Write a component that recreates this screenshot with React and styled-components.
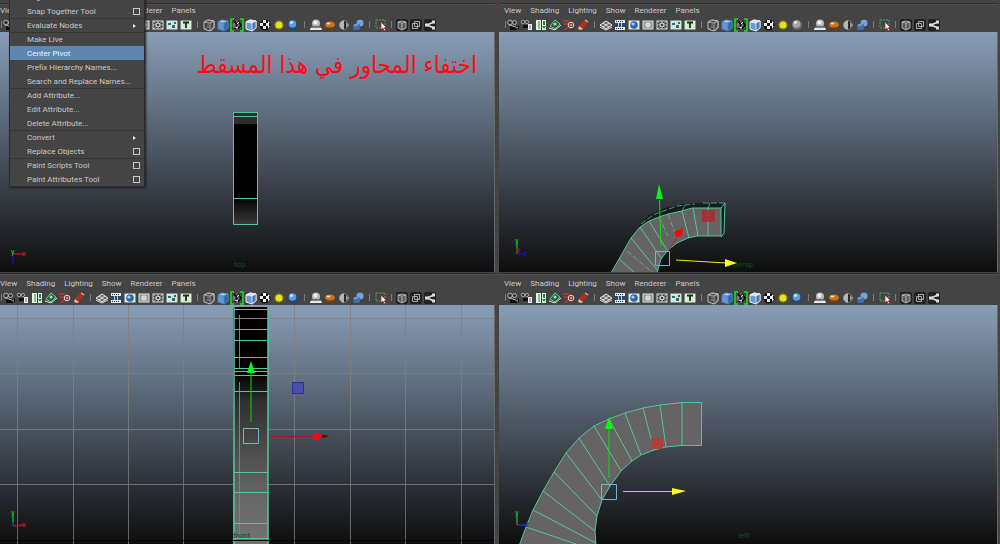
import styled, { createGlobalStyle, css } from 'styled-components';

const GlobalStyle = createGlobalStyle`
  * {
    box-sizing: border-box;
  }
  body {
    margin: 0;
    background: #444444;
    font-family: Roboto, 'Liberation Sans', sans-serif;
    font-size: 8px;
    color: #c8c8c8;
  }
  button {
    font: inherit;
    color: inherit;
    border: 0;
    padding: 0;
    background: none;
  }
`;

const mesh = '#52c79a';

const Workspace = styled.main`
  position: relative;
  display: grid;
  grid-template-columns: 495fr 499fr;
  grid-template-rows: 272fr 271fr;
  gap: 1px 4px;
  height: 100vh;
  min-height: 400px;
  padding-right: 2px;
  overflow: hidden;
`;

const Panel = styled.section`
  display: flex;
  flex-direction: column;
  min-width: 0;
  min-height: 0;
  overflow: hidden;
`;

const Header = styled.header`
  padding-top: 4px;
  padding-left: ${({ $inset }) => ($inset ? '5px' : '0')};
  box-shadow: ${({ $top }) =>
    $top
      ? 'inset 0 3px 0 #444444, inset 0 4px 0 #303030, inset 0 5px 0 #505050'
      : 'inset 0 1px 0 #2e2e2e, inset 0 2px 0 #505050'};
`;

const MenuBar = styled.nav`
  display: flex;
  gap: 9px;
  height: 13px;

  button {
    line-height: 13px;
    white-space: nowrap;
  }
`;

const Toolbar = styled.div`
  display: flex;
  align-items: center;
  height: 15px;
`;

const Gap = styled.span`
  display: flex;
  align-items: center;
  justify-content: center;
  flex: none;
  width: ${({ $width }) => $width}px;
  height: 14px;

  &::after {
    content: '';
    width: 1px;
    height: 7px;
    background: #7c7c7c;
  }
`;

const Tool = styled.button`
  display: flex;
  flex: none;
  width: 14px;
  height: 14px;

  svg {
    width: 14px;
    height: 14px;
  }
`;

const Viewport = styled.div`
  position: relative;
  flex: 1;
  min-height: 0;
  border-right: 1px solid #66696c;
  background: linear-gradient(#889db6, #49525e 52%, #0d0d0d);
`;

const Scene = styled.svg`
  display: block;
  width: 100%;
  height: 100%;

  text {
    font-family: Roboto, 'Liberation Sans', sans-serif;
  }
`;

const Note = styled.p`
  position: absolute;
  top: 15px;
  right: 17px;
  margin: 0;
  color: #ff0a14;
  font-family: 'DejaVu Sans Condensed', 'DejaVu Sans', sans-serif;
  font-size: 24px;
  line-height: 36px;
  white-space: nowrap;
`;

const DropDown = styled.div`
  position: absolute;
  top: -10px;
  left: 9px;
  width: 136px;
  background: #444444;
  border: 1px solid #2b2b2b;
  border-top: 0;
  box-shadow: 1px 1px 2px #1c1c1c;
`;

const Item = styled.button`
  display: flex;
  align-items: center;
  justify-content: space-between;
  width: 100%;
  height: 14px;
  padding: 0 4px 0 17px;
  line-height: 13px;
  text-align: left;
  white-space: nowrap;
  ${({ $ruled }) =>
    $ruled &&
    css`
      border-top: 1px solid #353535;
    `}
  ${({ $active }) =>
    $active &&
    css`
      background: #5c86b2;
      color: #f2f2f2;
    `}
`;

const OptionBox = styled.span`
  width: 7px;
  height: 7px;
  border: 1px solid #c8c8c8;
`;

const SubArrow = styled.span`
  margin-right: 4px;
  border: 2px solid transparent;
  border-left: 3px solid #e0e0e0;
  border-right: 0;
`;

const menus = ['View', 'Shading', 'Lighting', 'Show', 'Renderer', 'Panels'];

const modifyItems = [
  { label: 'Align Tool' },
  { label: 'Snap Together Tool', box: true },
  { label: 'Evaluate Nodes', sub: true, ruled: true },
  { label: 'Make Live', ruled: true },
  { label: 'Center Pivot', active: true },
  { label: 'Prefix Hierarchy Names...' },
  { label: 'Search and Replace Names...' },
  { label: 'Add Attribute...', ruled: true },
  { label: 'Edit Attribute...' },
  { label: 'Delete Attribute...' },
  { label: 'Convert', sub: true, ruled: true },
  { label: 'Replace Objects', box: true },
  { label: 'Paint Scripts Tool', box: true, ruled: true },
  { label: 'Paint Attributes Tool', box: true },
];

const Cube = ({ top, left, right, line }) => (
  <>
    <path d="M2 4L6 2L12 3V10L8 13L2 11Z" fill={left} stroke={line} />
    <path d="M2 4L6 2L12 3L8 5Z" fill={top} stroke={line} strokeWidth=".8" />
    <path d="M8 5L12 3V10L8 13Z" fill={right} stroke={line} strokeWidth=".8" />
  </>
);

const Checks = () => (
  <>
    <circle cx="7" cy="7" r="5.5" fill="#111" />
    <path
      d="M5 2h3v3H5zM2 5h3v3H2zM8 5h3v3H8zM5 8h3v3H5zM10 8h2l-2 3zM10 3l2 2h-2z"
      fill="#eee"
    />
  </>
);

const Ball = ({ base, shade }) => (
  <>
    <circle cx="7" cy="7" r="5" fill={shade} />
    <circle cx="6.5" cy="6" r="3.8" fill={base} />
    <circle cx="5.5" cy="4.5" r="1.5" fill="#fff" opacity=".75" />
  </>
);

const Tile = ({ fill, children }) => (
  <>
    <rect x="2" y="3" width="10" height="8" fill={fill} stroke="#d8e4dc" />
    {children}
  </>
);

const icons = {
  'Select camera': (
    <>
      <circle cx="4" cy="4.5" r="2.3" fill="#333" stroke="#ccc" strokeWidth=".8" />
      <circle cx="8.5" cy="4.5" r="2" fill="#333" stroke="#ccc" strokeWidth=".8" />
      <path d="M4 8h7v4H4zM11 9l2-2v5z" fill="#0d0d0d" />
      <path d="M3 7l7 2M10 10l2-1" stroke="#bbb" />
    </>
  ),
  'Camera attributes': (
    <>
      <circle cx="3" cy="4" r="1.8" fill="#333" stroke="#bbb" strokeWidth=".8" />
      <circle cx="7" cy="4" r="1.6" fill="#333" stroke="#bbb" strokeWidth=".8" />
      <path d="M3 7h5v3H3z" fill="#111" />
      <path d="M8 6h4v6H8z" fill="#eee" />
      <path d="M9 8h2M9 10h2" stroke="#777" />
    </>
  ),
  Bookmarks: (
    <>
      <path d="M2 2h10v10H2z" fill="#e6f4e4" />
      <path d="M4 3h2v8H4z" fill="#7cc489" />
      <path d="M7 2h1v10H7z" fill="#3a3a3a" />
      <path d="M9 3h2v4H9z" fill="#238a38" />
      <path d="M8 8h4l-2 3z" fill="#238a38" />
    </>
  ),
  'Image plane': (
    <>
      <path d="M2 8L7 2L12 6L7 11Z" fill="#2d5b40" stroke="#6bd08d" />
      <path d="M1 10l6 2 6-5" fill="none" stroke="#d6e7da" />
      <circle cx="7" cy="6" r="1.5" fill="#9fe0b0" />
    </>
  ),
  '2D pan and zoom': (
    <>
      <path d="M1 3h6M2 6h4M3 12l4-4" stroke="#c4362c" strokeWidth="1.5" />
      <circle cx="9" cy="7" r="2.8" fill="#6b1d18" stroke="#e8dcdc" />
      <path d="M9 5.500v3M7.500 7h3" stroke="#ffb0a0" />
    </>
  ),
  'Grease pencil': (
    <>
      <path d="M3 8L9 2l3 2-5 7z" fill="#b92a1e" />
      <path d="M9 2l3 2" stroke="#f3a090" strokeWidth="1.500" />
      <path d="M2 11l1-3 4 3-2 1z" fill="#e9b8a0" />
    </>
  ),
  Grid: (
    <>
      <path d="M1 7l6-4 6 4-6 4z" fill="#6a6a6a" stroke="#eee" />
      <path d="M4 5l6 4M10 5L4 9M1 9l6 3 6-3" fill="none" stroke="#ddd" />
    </>
  ),
  'Film gate': (
    <>
      <path d="M2 2h10v10H2z" fill="#e4ecf2" />
      <path d="M2 5h10v4H2z" fill="#2a4a68" />
      <path d="M3 3.500h8M3 10.500h8" stroke="#1c2c3a" strokeDasharray="1 1" />
      <path d="M5.500 5v4M8.500 5v4" stroke="#b5cadb" />
    </>
  ),
  'Resolution gate': (
    <Tile fill="#dce9f4">
      <circle cx="7" cy="7" r="3.8" fill="#2b6aa6" />
      <circle cx="6" cy="6" r="1.6" fill="#a6d2f5" />
    </Tile>
  ),
  'Gate mask': (
    <Tile fill="#959595">
      <circle cx="7" cy="7" r="2.800" fill="#d6d6d6" />
    </Tile>
  ),
  'Field chart': (
    <Tile fill="#2f2f2f">
      <path d="M2 3l10 8M12 3L2 11M7 3v8M2 7h10" stroke="#ddd" strokeWidth=".8" />
      <circle cx="7" cy="7" r="2" fill="#444" stroke="#eee" />
    </Tile>
  ),
  'Safe action': (
    <Tile fill="#cfe9d8">
      <path d="M3 5h3v2H3zM7 7h3v3H7zM9 4h2v2H9z" fill="#2b6f78" />
    </Tile>
  ),
  'Safe title': (
    <Tile fill="#d6f2d2">
      <path d="M4 4.500h6M7 4v6" stroke="#16321a" strokeWidth="1.800" />
    </Tile>
  ),
  Wireframe: (
    <>
      <Cube top="none" left="#444" right="none" line="#b8b8b8" />
      <path d="M6 2v7l6 1M6 9l-4 2" fill="none" stroke="#888" strokeWidth=".8" />
    </>
  ),
  'Smooth shade': <Cube top="#b9d6f5" left="#5f98d6" right="#356aa8" line="#4c80bb" />,
  'Use default material': (
    <>
      <circle cx="7" cy="7" r="4.500" fill="#777" />
      <path d="M4 3l3 3-2 5M8 3l3 4-3 4" fill="none" stroke="#111" strokeWidth="2" />
      <path d="M7 6l2-2M5 9l3 1" stroke="#eee" />
      <path d="M4 1H1v12h3M10 1h3v12h-3" fill="none" stroke="#15e51b" strokeWidth="1.500" />
    </>
  ),
  'Wireframe on shaded': <Cube top="#d8e8fa" left="#6b9bd0" right="#4779b3" line="#e6eef8" />,
  Textured: <Checks />,
  'Use all lights': (
    <>
      <circle cx="7" cy="7" r="5" fill="#6d6a24" />
      <circle cx="7" cy="7" r="3.500" fill="#e8e21a" />
    </>
  ),
  Shadows: <Ball base="#5a9bd8" shade="#1f4a7c" />,
  'Shadows off': <Ball base="#a8a8a8" shade="#6c6c6c" />,
  Ambient: (
    <>
      <path d="M1 11l3-3h6l3 3v1H1z" fill="#e8e8e8" />
      <circle cx="7" cy="5.500" r="4" fill="#b9b9b9" />
      <path d="M3 9h8" stroke="#222" />
      <circle cx="6.500" cy="4.500" r="2" fill="#f2f2f2" />
    </>
  ),
  'Motion blur': (
    <>
      <ellipse cx="7" cy="7.500" rx="5.500" ry="4" fill="#7c3d0b" />
      <ellipse cx="7" cy="6.500" rx="4.800" ry="3" fill="#c87426" />
      <ellipse cx="5.500" cy="5.500" rx="2" ry="1" fill="#ffdca0" />
    </>
  ),
  Multisample: (
    <>
      <circle cx="7" cy="7" r="4.500" fill="#2a2a2a" stroke="#777" />
      <path d="M7 2.500a4.500 4.500 0 000 9z" fill="#b5b5b5" />
      <path d="M9 4v6l3-3z" fill="#999" />
    </>
  ),
  'Depth of field': (
    <>
      <circle cx="9" cy="5" r="3.500" fill="#6fa4dc" />
      <rect x="2" y="6" width="7" height="6" rx="2" fill="#3b6fae" />
      <path d="M3 7h4" stroke="#9cc7f3" />
    </>
  ),
  'Isolate select': (
    <>
      <rect x="2" y="2" width="9" height="8" fill="none" stroke="#3fae63" strokeDasharray="2 1" />
      <path d="M7 4v8l2-2 1 3 1.500-.5-1-3h2z" fill="#f3f3f3" stroke="#a51f28" strokeWidth=".8" />
    </>
  ),
  'X-ray': (
    <>
      <rect x="1" y="1" width="12" height="12" rx="2" fill="#222" />
      <path
        d="M3 4l4-1 4 1v6l-4 2-4-2zM3 4l4 1 4-1M7 5v7"
        fill="#5c5c5c"
        stroke="#c8c8c8"
        strokeWidth=".8"
      />
    </>
  ),
  'X-ray joints': (
    <>
      <rect x="1" y="1" width="12" height="12" rx="2" fill="#222" />
      <path d="M3.500 5.500h5v5h-5zM5.500 3.500h5v5h-5z" fill="none" stroke="#a8a8a8" />
    </>
  ),
  'Share view': (
    <>
      <rect x="1" y="1" width="12" height="12" rx="2" fill="#222" />
      <path d="M11 4L4 7l7 3" fill="none" stroke="#e0e0e0" strokeWidth="1.500" />
      <path d="M2 5.500h4v3H2zM9 2.500h3v3H9zM9 8.500h3v3H9z" fill="#e0e0e0" />
    </>
  ),
};

const toolGroups = [
  {
    gap: 2,
    tools: ['Select camera', 'Camera attributes', 'Bookmarks', 'Image plane', '2D pan and zoom', 'Grease pencil'],
  },
  {
    gap: 9,
    tools: ['Grid', 'Film gate', 'Resolution gate', 'Gate mask', 'Field chart', 'Safe action', 'Safe title'],
  },
  {
    gap: 9,
    tools: ['Wireframe', 'Smooth shade', 'Use default material', 'Wireframe on shaded', 'Textured', 'Use all lights', 'Shadows'],
  },
  { gap: 9, tools: ['Ambient', 'Motion blur', 'Multisample', 'Depth of field'] },
  { gap: 9, tools: ['Isolate select'] },
  { gap: 7, tools: ['X-ray', 'X-ray joints', 'Share view'] },
];

const Axis = ({ x, y, ends }) => (
  <g fontSize="7" fontWeight="bold">
    {ends.map(({ name, dx, dy, color }) => (
      <g key={name}>
        <path d={`M${x} ${y}l${dx} ${dy}`} stroke={color} strokeWidth="1.5" />
        {name !== 'origin' && (
          <text x={x + dx - 2} y={y + dy + 2} fill={color}>
            {name}
          </text>
        )}
      </g>
    ))}
  </g>
);

const Caption = ({ x, y, children }) => (
  <text x={x} y={y} fontSize="8" fill="#0c4a24">
    {children}
  </text>
);

function TopScene() {
  return (
    <Scene viewBox="0 32 494 240" preserveAspectRatio="xMidYMid slice">
      <defs>
        <linearGradient id="top-foot" x2="0" y2="1">
          <stop stopColor="#060606" />
          <stop offset="1" stopColor="#3a3a3a" />
        </linearGradient>
      </defs>
      <path d="M233 113h25v11h-25z" fill="#2d2d2d" />
      <path d="M233 124h25v75h-25z" fill="#000" />
      <path d="M233 199h25v26h-25z" fill="url(#top-foot)" />
      <path
        d="M233.500 112.500h24v112h-24zM233.500 116.500h24M233.500 198.500h24"
        fill="none"
        stroke={mesh}
      />
      <Axis
        x={13}
        y={254}
        ends={[
          { name: 'x', dx: 11, dy: 0, color: '#b3141c' },
          { name: 'origin', dx: 0, dy: 10, color: '#1410b8' },
          { name: 'y', dx: 0, dy: -2, color: '#10a828' },
        ]}
      />
      <Caption x={234} y={267}>top</Caption>
    </Scene>
  );
}

function PerspScene() {
  return (
    <Scene viewBox="499 32 498 240" preserveAspectRatio="xMidYMid slice">
      <path
        d="M636 230L649 215L665 208L682 204L700 203H725L724 233L721 237V208L692 208L668 214L649 221Z"
        fill="#161c1d"
      />
      <path
        d="M721 208H708L692 208L682 211L668 214L659 217L649 221L640 227L631 238L619 259L611 273H657L661 259L668 250L677 243L688 238L697 236H721Z"
        fill="#656363"
        stroke={mesh}
      />
      <path
        d="M708 208v28M693 208l5 28M682 211l7 27M649 221l18 29M640 227l21 31M631 238l27 33M619 259l16 14M721 208l4-5-1 30-3 4"
        fill="none"
        stroke={mesh}
      />
      <path
        d="M668 214l9 25M659 217l9 19M627 251l26 22M641 224l12-9 24-9 18-2M703 203h22M708 208l2-5M682 211l3-6"
        fill="none"
        stroke={mesh}
        strokeDasharray="6 2"
        opacity=".75"
      />
      <path d="M702 210h13v12h-13z" fill="#a82c2e" opacity=".85" />
      <path d="M669 250l9-14" stroke="#a22" />
      <path d="M674 232l9-4-1 8-6 1z" fill="#ff0606" />
      <path d="M661 246L659.500 200" stroke="#09e40c" />
      <path d="M659 184l4 15h-7z" fill="#00ff08" />
      <path d="M655.500 251.500h14v14h-14z" fill="none" stroke="#79b4cc" />
      <path d="M676 260l50 3" stroke="#f0ea10" />
      <Caption x={733} y={267}>persp</Caption>
      <path d="M725 259l12 4-12 4z" fill="#ffff0a" />
      <Axis
        x={517}
        y={254}
        ends={[
          { name: 'z', dx: 9, dy: 0, color: '#1410a8' },
          { name: 'y', dx: 0, dy: -13, color: '#10a828' },
          { name: 'x', dx: 1, dy: -4, color: '#a3141c' },
        ]}
      />
    </Scene>
  );
}

function FrontScene() {
  return (
    <Scene viewBox="0 305 494 239" preserveAspectRatio="xMidYMid slice">
      <defs>
        <linearGradient id="front-body" x2="0" y2="1">
          <stop offset=".28" stopColor="#000" />
          <stop offset=".4" stopColor="#303030" />
          <stop offset=".8" stopColor="#676767" />
          <stop offset="1" stopColor="#727272" />
        </linearGradient>
      </defs>
      <path
        d="M17.500 305v239M73.500 305v239M128.500 305v239M183.500 305v239M294.500 305v239M350.500 305v239M405.500 305v239M461.500 305v239M0 318.500h494M0 373.500h494M0 429.500h494M0 484.500h494"
        stroke="#808080"
        opacity=".75"
      />
      <path d="M233 307h35v237h-35z" fill="url(#front-body)" />
      <path d="M239.500 315v53M239.500 382v156M234 318.500h34" stroke="#858080" />
      <path
        d="M234 309.500h34M234 329.500h34M234 340.500h34M234 357.500h34M234 368.500h34M234 371.500h34M234 375.500h34M234 391.500h34M234 472.500h34M234 492.500h34M234 523.500h34M234 538.500h34"
        stroke={mesh}
      />
      <path d="M234 307v237M268 307v237" stroke={mesh} strokeWidth="1.500" />
      <path d="M0 540.500h494" stroke="#050505" />
      <path d="M251 422v-50" stroke="#09d80c" />
      <path d="M251 361l4 12h-8z" fill="#00ff08" />
      <path d="M243.500 428.500h15v15h-15z" fill="none" stroke="#79b4cc" />
      <path d="M269 436.500h45" stroke="#b3141c" />
      <path d="M313 433l16 3-16 4z" fill="#ff0606" />
      <path d="M322 435l7 1-7 2z" fill="#1c0505" />
      <path d="M292.500 382.500h11v11h-11z" fill="#4b4ea6" stroke="#2b2bb0" />
      <Axis
        x={13}
        y={526}
        ends={[
          { name: 'x', dx: 11, dy: -1, color: '#b3141c' },
          { name: 'y', dx: 0, dy: -13, color: '#10a828' },
          { name: 'origin', dx: 0, dy: -4, color: '#1420d8' },
        ]}
      />
      <Caption x={233} y={538}>front</Caption>
    </Scene>
  );
}

function LeftScene() {
  return (
    <Scene viewBox="499 305 498 239" preserveAspectRatio="xMidYMid slice">
      <path
        d="M701.500 402.500H682L660 405L643 408L625 413L609 419L594 426L579 438L566 453L554 472L543 491L533 510L526 527L519 546H596L595 531L597 516L602 500L610 486L621 471L632 461L641 455L654 450L666 447L682 445.500H701.500Z"
        fill="#656363"
        stroke={mesh}
      />
      <path
        d="M682 403v42M660 405l6 42M643 408l11 42M625 413l16 42M609 419l23 42M594 426l27 45M579 438l31 48M566 453l36 47M554 472l43 44M543 491l52 40M533 510l63 33M526 527l50 17"
        stroke={mesh}
      />
      <path d="M651 438h12v11h-12z" fill="#b8393a" opacity=".9" />
      <path d="M609 478v-50" stroke="#09e40c" />
      <path d="M609 417l4 12h-8z" fill="#00ff08" />
      <path d="M601.500 484.500h15v15h-15z" fill="none" stroke="#79b4cc" />
      <path d="M623 491.500h50" stroke="#d8d210" />
      <path d="M672 488l14 3-14 4z" fill="#ffff0a" />
      <Axis
        x={517}
        y={525}
        ends={[
          { name: 'z', dx: 10, dy: 0, color: '#2030b8' },
          { name: 'y', dx: 0, dy: -12, color: '#10a828' },
          { name: 'origin', dx: 0, dy: -3, color: '#c3141c' },
        ]}
      />
      <Caption x={738} y={538}>left</Caption>
    </Scene>
  );
}

function ViewPanel({ top, inset, flatShadows, children }) {
  return (
    <Panel>
      <Header $top={top} $inset={inset}>
        <MenuBar>
          {menus.map((name) => (
            <button key={name}>{name}</button>
          ))}
        </MenuBar>
        <Toolbar>
          {toolGroups.map(({ gap, tools }) => [
            <Gap key={`before-${tools[0]}`} $width={gap} />,
            ...tools.map((name) => (
              <Tool key={name} aria-label={name}>
                <svg viewBox="0 0 14 14">
                  {icons[flatShadows && name === 'Shadows' ? 'Shadows off' : name]}
                </svg>
              </Tool>
            )),
          ])}
        </Toolbar>
      </Header>
      <Viewport>{children}</Viewport>
    </Panel>
  );
}

function ModifyMenu() {
  return (
    <DropDown>
      {modifyItems.map(({ label, box, sub, ruled, active }) => (
        <Item key={label} $ruled={ruled} $active={active}>
          {label}
          {box && <OptionBox />}
          {sub && <SubArrow />}
        </Item>
      ))}
    </DropDown>
  );
}

export default function App() {
  return (
    <>
      <GlobalStyle />
      <Workspace>
        <ViewPanel top>
          <TopScene />
          <Note lang="ar" dir="rtl">اختفاء المحاور في هذا المسقط</Note>
        </ViewPanel>
        <ViewPanel top inset flatShadows>
          <PerspScene />
        </ViewPanel>
        <ViewPanel>
          <FrontScene />
        </ViewPanel>
        <ViewPanel inset>
          <LeftScene />
        </ViewPanel>
        <ModifyMenu />
      </Workspace>
    </>
  );
}
